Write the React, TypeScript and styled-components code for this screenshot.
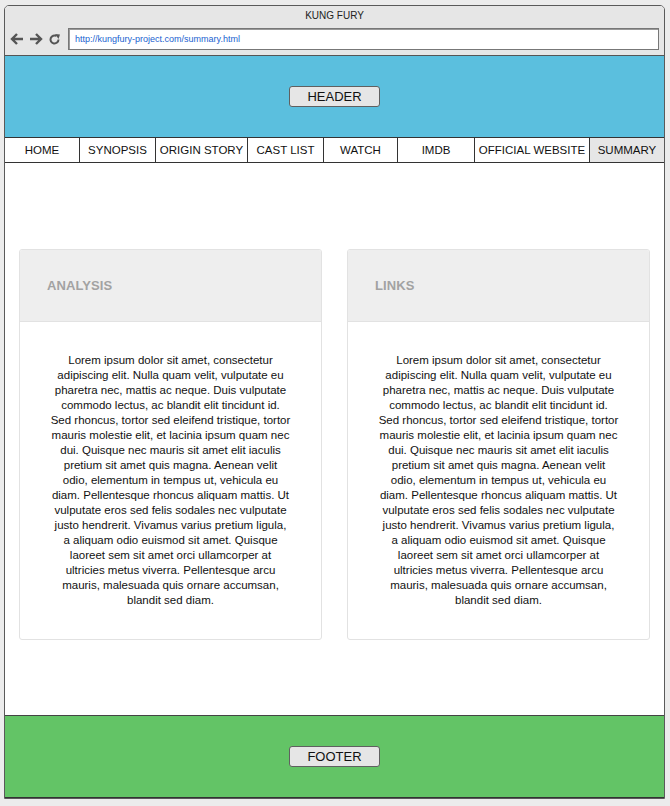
import React from "react";
import styled, { createGlobalStyle } from "styled-components";

const Global = createGlobalStyle`
  html, body { margin: 0; padding: 0; background: #ececec; }
  body { font-family: "Liberation Sans", Arial, sans-serif; }
  * { box-sizing: border-box; }
`;

const Screen = styled.div`
  width: 670px;
  height: 806px;
  padding: 5px 0 0 4px;
  background: #ececec;
`;

const Frame = styled.div`
  width: 661px;
  border: 1px solid #5a5a5a;
  border-radius: 5px 5px 0 0;
  background: #fff;
  overflow: hidden;
`;

const TitleBar = styled.div`
  background: #e6e6e6;
  height: 50px;
  border-bottom: 1px solid #555;
  display: flex;
  flex-direction: column;
`;

const Title = styled.div`
  height: 22px;
  line-height: 20px;
  text-align: center;
  font-size: 10px;
  color: #222;
`;

const AddressRow = styled.div`
  display: flex;
  align-items: center;
  height: 22px;
  padding-left: 5px;
`;

const NavIcons = styled.div`
  display: flex;
  align-items: center;
  width: 58px;
  gap: 5px;
`;

const Address = styled.div`
  width: 591px;
  height: 22px;
  border: 1px solid #777;
  box-shadow: inset 1px 1px 0 #999;
  background: #fff;
  font-size: 9px;
  color: #1a5fd0;
  line-height: 20px;
  padding-left: 6px;
`;

const Band = styled.div<{ $bg: string }>`
  height: 81px;
  background: ${(p) => p.$bg};
  display: flex;
  align-items: center;
  justify-content: center;
`;

const MockButton = styled.div`
  width: 91px;
  height: 21px;
  border: 1px solid #606060;
  border-radius: 3px;
  background: #e6e6e6;
  font-size: 13px;
  color: #111;
  display: flex;
  align-items: center;
  justify-content: center;
`;

const Nav = styled.div`
  display: grid;
  grid-template-columns: 75px 76px 92px 76px 74px 77px 115px 74px;
  border-top: 1px solid #333;
  border-bottom: 1px solid #333;
  height: 26px;
`;

const NavItem = styled.div<{ $active?: boolean; $last?: boolean }>`
  border-right: ${(p) => (p.$last ? "none" : "1px solid #333")};
  background: ${(p) => (p.$active ? "#e6e6e6" : "#fff")};
  font-size: 11.5px;
  color: #111;
  display: flex;
  align-items: center;
  justify-content: center;
  white-space: nowrap;
`;

const Main = styled.div`
  height: 552px;
  padding: 86px 14px 0 14px;
  display: grid;
  grid-template-columns: 303px 303px;
  column-gap: 25px;
  align-items: start;
  background: #fff;
`;

const Card = styled.div`
  border: 1px solid #e2e2e2;
  border-radius: 3px;
  overflow: hidden;
  background: #fff;
`;

const CardHead = styled.div`
  height: 72px;
  background: #eeeeee;
  border-bottom: 1px solid #e2e2e2;
  display: flex;
  align-items: center;
  padding-left: 27px;
  font-size: 13px;
  font-weight: bold;
  color: #a2a2a2;
  letter-spacing: 0.1px;
`;

const CardBody = styled.p`
  margin: 0;
  padding: 31px 10px 31px;
  font-size: 11.5px;
  line-height: 15px;
  color: #111;
  text-align: center;
`;

const Line = styled.span`
  display: block;
  white-space: nowrap;
`;

const FooterBand = styled(Band)`
  border-top: 1px solid #444;
  border-bottom: 1px solid #333;
  height: 83px;
`;

const Back = () => (
  <svg width="14" height="14" viewBox="0 0 14 14">
    <path d="M13 7H2.5M7 2L2 7l5 5" stroke="#555" strokeWidth="2.4" fill="none" />
  </svg>
);
const Fwd = () => (
  <svg width="14" height="14" viewBox="0 0 14 14">
    <path d="M1 7h10.5M7 2l5 5-5 5" stroke="#555" strokeWidth="2.4" fill="none" />
  </svg>
);
const Reload = () => (
  <svg width="13" height="13" viewBox="0 0 13 13">
    <path d="M10.5 6.5A4 4 0 1 1 8.5 3" stroke="#555" strokeWidth="2" fill="none" />
    <path d="M7 1l5 0.5-1.5 4.5z" fill="#555" />
  </svg>
);

const loremLines = [
  "Lorem ipsum dolor sit amet, consectetur",
  "adipiscing elit. Nulla quam velit, vulputate eu",
  "pharetra nec, mattis ac neque. Duis vulputate",
  "commodo lectus, ac blandit elit tincidunt id.",
  "Sed rhoncus, tortor sed eleifend tristique, tortor",
  "mauris molestie elit, et lacinia ipsum quam nec",
  "dui. Quisque nec mauris sit amet elit iaculis",
  "pretium sit amet quis magna. Aenean velit",
  "odio, elementum in tempus ut, vehicula eu",
  "diam. Pellentesque rhoncus aliquam mattis. Ut",
  "vulputate eros sed felis sodales nec vulputate",
  "justo hendrerit. Vivamus varius pretium ligula,",
  "a aliquam odio euismod sit amet. Quisque",
  "laoreet sem sit amet orci ullamcorper at",
  "ultricies metus viverra. Pellentesque arcu",
  "mauris, malesuada quis ornare accumsan,",
  "blandit sed diam.",
];

const navItems = [
  "HOME",
  "SYNOPSIS",
  "ORIGIN STORY",
  "CAST LIST",
  "WATCH",
  "IMDB",
  "OFFICIAL WEBSITE",
  "SUMMARY",
];

const Lorem = () => (
  <CardBody>
    {loremLines.map((l, i) => (
      <Line key={i}>{l} </Line>
    ))}
  </CardBody>
);

export default function App() {
  return (
    <>
      <Global />
      <Screen>
        <Frame>
          <TitleBar>
            <Title>KUNG FURY</Title>
            <AddressRow>
              <NavIcons>
                <Back />
                <Fwd />
                <Reload />
              </NavIcons>
              <Address>http://kungfury-project.com/summary.html</Address>
            </AddressRow>
          </TitleBar>
          <Band $bg="#5bbfde">
            <MockButton>HEADER</MockButton>
          </Band>
          <Nav>
            {navItems.map((n, i) => (
              <NavItem key={n} $active={n === "SUMMARY"} $last={i === navItems.length - 1}>
                {n}
              </NavItem>
            ))}
          </Nav>
          <Main>
            <Card>
              <CardHead>ANALYSIS</CardHead>
              <Lorem />
            </Card>
            <Card>
              <CardHead>LINKS</CardHead>
              <Lorem />
            </Card>
          </Main>
          <FooterBand $bg="#63c466">
            <MockButton>FOOTER</MockButton>
          </FooterBand>
        </Frame>
      </Screen>
    </>
  );
}
